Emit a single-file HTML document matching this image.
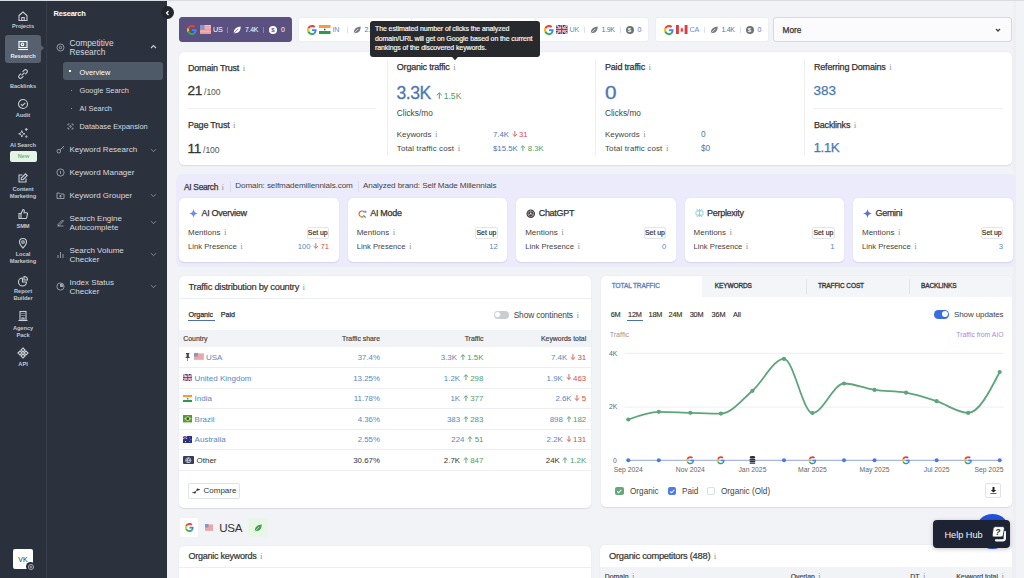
<!DOCTYPE html>
<html><head><meta charset="utf-8">
<style>
*{box-sizing:border-box;margin:0;padding:0}
html,body{width:1024px;height:578px;overflow:hidden;background:#f2f3f7;font-family:"Liberation Sans",sans-serif;color:#333}
.a{position:absolute;white-space:nowrap}
#topline{position:absolute;left:0;top:0;width:1024px;height:1px;background:#d9dce3;z-index:50}
#rail{position:absolute;left:0;top:0;width:47px;height:578px;background:#2b313c;border-right:1px solid #363d48}
#menu{position:absolute;left:47px;top:0;width:120px;height:578px;background:#2c323d}
.ri{position:absolute;left:0;width:46px;text-align:center;color:#c3c8cf;font-size:5.7px;line-height:7px;font-weight:bold;letter-spacing:-.05px}
.ri svg{display:block;margin:0 auto}
.mi{position:absolute;color:#d6dae0;font-size:8px;line-height:9px}
.ms{font-size:7.4px}
.card{position:absolute;background:#fff;border-radius:5px;box-shadow:0 .6px 1.2px rgba(30,40,60,.12)}
.lbl{font-size:8.6px;color:#333}
.inf{color:#9aa0a8;font-size:7px;margin-left:2px}
.blue{color:#4b78b2}
.grn{color:#4f9a6d}
.red{color:#d4504a}
</style>
<style>
.t{position:absolute;white-space:nowrap;line-height:10px;height:10px}
.chip{position:absolute;top:17px;height:24.6px;background:#fff;border-radius:3px;border:1px solid #eceef2}
.chip.act{background:#5a5180;border-color:#5a5180}
.chip > *{position:absolute}
.ccode{top:7px;font-size:7.2px;color:#6a8cc3;line-height:10px;letter-spacing:-.2px}
.cval{top:7px;font-size:7px;color:#4b78b2;line-height:10px;letter-spacing:-.3px}
.act .ccode,.act .cval{color:#fff}
.csep{top:9px;width:1px;height:6px;background:#dde0e6}
.act .csep{background:#8a84a6}
.dol{top:8px;width:8px;height:8px;border-radius:50%;background:#6e7278;color:#fff;font-size:6px;line-height:8px;text-align:center;font-weight:bold}
.act .dol{background:#fff;color:#5a5180}
.flag{top:7.5px;width:11.5px;height:9px;overflow:hidden}
.aicard{position:absolute;top:197.5px;width:159.5px;height:64px;background:#fff;border-radius:5px;box-shadow:0 .6px 1.2px rgba(30,40,60,.12)}
.aicard .t{}
.setup{position:absolute;left:127.5px;top:29.5px;width:22.5px;height:11.5px;border:1px solid #e3e5ea;border-radius:2px;background:#fff;font-size:6.9px;line-height:9.5px;text-align:center;color:#333;font-weight:normal;-webkit-text-stroke:.2px #333}
.th{font-size:6.8px;color:#444;font-weight:bold}
.td{font-size:7.9px}
.inf{font-family:'Liberation Serif',serif;color:#8f959d;font-size:9px;margin-left:3.5px;letter-spacing:0;-webkit-text-stroke:0}
</style>
</head><body>
<div id="topline"></div>
<div id="rail">
  <div class="ri" style="top:10px">
    <svg width="12" height="12" viewBox="0 0 12 12" fill="none" stroke="#c9ced6" stroke-width="1.1"><path d="M2 5.5L6 2l4 3.5V10.5H2z"/><path d="M4.8 10.5V7.5h2.4v3"/></svg>
    <div style="margin-top:1px">Projects</div>
  </div>
  <div style="position:absolute;left:5px;top:35px;width:36px;height:28px;background:#56606e;border-radius:3px"></div>
  <div style="position:absolute;left:41px;top:45px;width:0;height:0;border-top:3.5px solid transparent;border-bottom:3.5px solid transparent;border-left:3.5px solid #56606e"></div>
  <div class="ri" style="top:40px;color:#e8ebef">
    <svg width="12" height="11" viewBox="0 0 12 11" fill="none" stroke="#fff" stroke-width="1.1"><rect x="2" y="1.5" width="8" height="6"/><path d="M1 9.5h10"/><circle cx="5.5" cy="4.3" r="1.3"/></svg>
    <div style="margin-top:2px">Research</div>
  </div>
  <div class="ri" style="top:68px">
    <svg width="12" height="12" viewBox="0 0 12 12" fill="none" stroke="#c9ced6" stroke-width="1.1"><g transform="rotate(-45 6 6)"><path d="M4.8 4.2H2.4a1.8 1.8 0 0 0 0 3.6h2.4M7.2 4.2h2.4a1.8 1.8 0 0 1 0 3.6H7.2M3.9 6h4.2"/></g></svg>
    <div style="margin-top:2.5px">Backlinks</div>
  </div>
  <div class="ri" style="top:98px">
    <svg width="12" height="12" viewBox="0 0 12 12" fill="none" stroke="#c9ced6" stroke-width="1.1"><circle cx="6" cy="6" r="4.5"/><path d="M4 6.2l1.4 1.4L8.2 4.8"/></svg>
    <div style="margin-top:2.2px">Audit</div>
  </div>
  <div class="ri" style="top:127px">
    <svg width="12" height="12" viewBox="0 0 12 12" fill="none" stroke="#c9ced6" stroke-width="1"><path d="M4.8 3.6C5.1 5.6 5.9 6.5 7.9 6.8 5.9 7.1 5.1 8 4.8 10 4.5 8 3.7 7.1 1.7 6.8 3.7 6.5 4.5 5.6 4.8 3.6z"/><path d="M9.3 1C9.4 1.9 9.8 2.3 10.7 2.4 9.8 2.5 9.4 2.9 9.3 3.8 9.2 2.9 8.8 2.5 7.9 2.4 8.8 2.3 9.2 1.9 9.3 1z" fill="#c9ced6" stroke-width=".5"/><path d="M9.3 8.4C9.4 9.2 9.7 9.5 10.5 9.6 9.7 9.7 9.4 10 9.3 10.8 9.2 10 8.9 9.7 8.1 9.6 8.9 9.5 9.2 9.2 9.3 8.4z" fill="#c9ced6" stroke-width=".5"/></svg>
    <div style="margin-top:2.5px">AI Search</div>
  </div>
  <div style="position:absolute;left:10px;top:151px;width:27px;height:11px;background:#e4f5e8;border-radius:2px;color:#6fb98a;font-size:5.6px;line-height:11px;text-align:center;font-weight:bold">New</div>
  <div class="ri" style="top:172px">
    <svg width="12" height="12" viewBox="0 0 12 12" fill="none" stroke="#c9ced6" stroke-width="1.1"><path d="M9 6.5v3.5H2V3h3.5"/><path d="M8.5 1.8l1.7 1.7L6 7.7H4.3V6z"/></svg>
    <div style="margin-top:2px">Content<br>Marketing</div>
  </div>
  <div class="ri" style="top:208px">
    <svg width="12" height="12" viewBox="0 0 12 12" fill="none" stroke="#c9ced6" stroke-width="1.1"><path d="M2 5.5h2v5H2z"/><path d="M4 5.5l2-4c1 0 1.5.7 1.2 2L7 4.8h2.6c.7 0 1 .6.9 1.1l-.8 3.8c-.1.5-.5.8-1 .8H4"/></svg>
    <div style="margin-top:3px">SMM</div>
  </div>
  <div class="ri" style="top:237px">
    <svg width="12" height="12" viewBox="0 0 12 12" fill="none" stroke="#c9ced6" stroke-width="1.1"><path d="M6 11S2.5 7.5 2.5 5a3.5 3.5 0 0 1 7 0C9.5 7.5 6 11 6 11z"/><circle cx="6" cy="5" r="1.3"/></svg>
    <div style="margin-top:2px">Local<br>Marketing</div>
  </div>
  <div class="ri" style="top:275px">
    <svg width="12" height="12" viewBox="0 0 12 12" fill="none" stroke="#c9ced6" stroke-width="1.1"><path d="M5.5 3a4 4 0 1 0 4 4h-4z"/><path d="M7 1.5a3.5 3.5 0 0 1 3.5 3.5H7z"/></svg>
    <div style="margin-top:1px">Report<br>Builder</div>
  </div>
  <div class="ri" style="top:310px">
    <svg width="12" height="12" viewBox="0 0 12 12" fill="none" stroke="#c9ced6" stroke-width="1.1"><rect x="3" y="1.5" width="6" height="9"/><path d="M1.5 10.5h9M4.5 3.5h1M6.5 3.5h1M4.5 5.5h1M6.5 5.5h1M5 10.5V8h2v2.5"/></svg>
    <div style="margin-top:2.7px">Agency<br>Pack</div>
  </div>
  <div class="ri" style="top:347px">
    <svg width="12" height="12" viewBox="0 0 12 12" fill="none" stroke="#c9ced6" stroke-width="1.1"><path d="M6 1l2 2-2 2-2-2zM6 7l2 2-2 2-2-2zM1 6l2-2 2 2-2 2zM7 6l2-2 2 2-2 2z"/></svg>
    <div style="margin-top:2px">API</div>
  </div>
  <div style="position:absolute;left:13px;top:549px;width:20px;height:20px;background:#fff;border-radius:2px;color:#333;font-size:7px;line-height:21px;text-align:center">VK</div>
  <div style="position:absolute;left:26px;top:562px;width:9px;height:9px;background:#2b313c;border-radius:50%;"></div>
  <svg style="position:absolute;left:26.5px;top:562.5px" width="8" height="8" viewBox="0 0 8 8" fill="none" stroke="#aab" stroke-width=".9"><circle cx="4" cy="4" r="2.6"/><circle cx="4" cy="4" r="1"/></svg>
</div>
<div id="menu">
  <div class="a" style="left:6.5px;top:8.5px;color:#fff;font-weight:bold;font-size:7.5px;letter-spacing:-.2px">Research</div>
  <svg class="a" style="left:8.5px;top:43px" width="9" height="9" viewBox="0 0 9 9" fill="none" stroke="#aeb4bd" stroke-width=".8"><circle cx="4.5" cy="4.5" r="3.5"/><circle cx="4.5" cy="4.5" r="1.2"/></svg>
  <div class="mi" style="left:22.5px;top:38.5px;font-size:8.4px">Competitive<br>Research</div>
  <svg class="a" style="left:103px;top:44px" width="7" height="5" viewBox="0 0 7 5" fill="none" stroke="#c9ced6" stroke-width="1.1"><path d="M1 4l2.5-2.5L6 4"/></svg>
  <div style="position:absolute;left:15.5px;top:62px;width:100px;height:18px;background:#4f5a68;border-radius:3px"></div>
  <div style="position:absolute;left:22px;top:70px;width:2px;height:2px;background:#fff"></div>
  <div class="mi ms" style="left:32.5px;top:67.5px;color:#fff">Overview</div>
  <div style="position:absolute;left:24px;top:89.5px;width:1px;height:1px;background:#8a9099"></div>
  <div class="mi ms" style="left:32.5px;top:86px">Google Search</div>
  <div style="position:absolute;left:24px;top:107.5px;width:1px;height:1px;background:#8a9099"></div>
  <div class="mi ms" style="left:32.5px;top:104px">AI Search</div>
  <svg class="a" style="left:20px;top:122.5px" width="7" height="7" viewBox="0 0 7 7" fill="none" stroke="#aeb4bd" stroke-width=".8"><path d="M1 2.5V1h1.5M4.5 1H6v1.5M6 4.5V6H4.5M2.5 6H1V4.5"/><circle cx="3.5" cy="3.5" r=".8"/></svg>
  <div class="mi ms" style="left:32.5px;top:122px">Database Expansion</div>
  <svg class="a" style="left:9px;top:145px" width="9" height="9" viewBox="0 0 9 9" fill="none" stroke="#aeb4bd" stroke-width=".8"><circle cx="2.8" cy="6.2" r="1.8"/><path d="M4.2 4.8L8 1M6.5 2.5l1 1"/></svg>
  <div class="mi" style="left:22.5px;top:145px">Keyword Research</div>
  <svg class="a" style="left:103px;top:148px" width="7" height="5" viewBox="0 0 7 5" fill="none" stroke="#8d949e" stroke-width=".9"><path d="M1 1.2l2.5 2.5L6 1.2"/></svg>
  <svg class="a" style="left:9px;top:168px" width="9" height="9" viewBox="0 0 9 9" fill="none" stroke="#aeb4bd" stroke-width=".8"><circle cx="4.5" cy="4.5" r="3.6"/><path d="M4.5 2.8v3"/></svg>
  <div class="mi" style="left:22.5px;top:167.5px">Keyword Manager</div>
  <svg class="a" style="left:9px;top:190.5px" width="9" height="9" viewBox="0 0 9 9" fill="none" stroke="#aeb4bd" stroke-width=".8"><path d="M1 2h2.5l1 1H8v4.5H1z"/><path d="M4.5 4v2.5M3.2 5.2h2.6"/></svg>
  <div class="mi" style="left:22.5px;top:190.5px">Keyword Grouper</div>
  <svg class="a" style="left:103px;top:193px" width="7" height="5" viewBox="0 0 7 5" fill="none" stroke="#8d949e" stroke-width=".9"><path d="M1 1.2l2.5 2.5L6 1.2"/></svg>
  <svg class="a" style="left:9px;top:218px" width="9" height="9" viewBox="0 0 9 9" fill="none" stroke="#aeb4bd" stroke-width=".8"><path d="M1.5 8h6M2 6.5l4.5-4.5 1 1L3 7.5H2z"/></svg>
  <div class="mi" style="left:22.5px;top:213.5px">Search Engine<br>Autocomplete</div>
  <svg class="a" style="left:103px;top:220px" width="7" height="5" viewBox="0 0 7 5" fill="none" stroke="#8d949e" stroke-width=".9"><path d="M1 1.2l2.5 2.5L6 1.2"/></svg>
  <svg class="a" style="left:9px;top:250px" width="9" height="9" viewBox="0 0 9 9" fill="none" stroke="#aeb4bd" stroke-width=".8"><path d="M2 8V5M4.5 8V2M7 8V4"/></svg>
  <div class="mi" style="left:22.5px;top:245.5px">Search Volume<br>Checker</div>
  <svg class="a" style="left:103px;top:252px" width="7" height="5" viewBox="0 0 7 5" fill="none" stroke="#8d949e" stroke-width=".9"><path d="M1 1.2l2.5 2.5L6 1.2"/></svg>
  <svg class="a" style="left:9px;top:282px" width="9" height="9" viewBox="0 0 9 9" fill="none" stroke="#aeb4bd" stroke-width=".8"><circle cx="4.5" cy="4.5" r="3.6"/><path d="M4.5 4.5V2A2.5 2.5 0 0 1 7 4.5z" fill="#aeb4bd"/></svg>
  <div class="mi" style="left:22.5px;top:277.5px">Index Status<br>Checker</div>
  <svg class="a" style="left:103px;top:284px" width="7" height="5" viewBox="0 0 7 5" fill="none" stroke="#8d949e" stroke-width=".9"><path d="M1 1.2l2.5 2.5L6 1.2"/></svg>
</div>
<div style="position:absolute;left:160.5px;top:6px;width:13.4px;height:13.4px;border-radius:50%;background:#22272e;z-index:5"></div>
<svg style="position:absolute;left:165px;top:10px;z-index:6" width="5" height="6" viewBox="0 0 5 6" fill="none" stroke="#fff" stroke-width="1.2"><path d="M3.5 1L1.5 3l2 2"/></svg>

<div id="main"><div style="position:absolute;left:1012.5px;top:0;width:3.5px;height:578px;background:#eeeff3"></div>
<div class="chip act" style="left:178.5px;width:113.5px">
<span style="left:7.5px;top:7px;line-height:0"><svg width="10" height="10" viewBox="0 0 48 48"><path fill="#EA4335" d="M24 9.5c3.5 0 6.6 1.2 9.1 3.6l6.8-6.8C35.8 2.5 30.3 0 24 0 14.6 0 6.6 5.4 2.6 13.3l7.9 6.1C12.4 13.7 17.7 9.5 24 9.5z"/><path fill="#4285F4" d="M46.1 24.5c0-1.6-.1-3.1-.4-4.5H24v9h12.4c-.5 2.9-2.2 5.3-4.6 7l7.2 5.6c4.2-3.9 7.1-9.7 7.1-17.1z"/><path fill="#FBBC05" d="M10.5 28.6c-.5-1.4-.8-3-.8-4.6s.3-3.2.8-4.6l-7.9-6.1C.9 16.6 0 20.2 0 24s.9 7.4 2.6 10.7l7.9-6.1z"/><path fill="#34A853" d="M24 48c6.5 0 11.9-2.1 15.9-5.8l-7.2-5.6c-2.2 1.5-5 2.4-8.7 2.4-6.3 0-11.6-4.2-13.5-10l-7.9 6.1C6.6 42.6 14.6 48 24 48z"/></svg></span>
<span style="position:absolute;display:block;overflow:hidden;width:11.5px;height:9px;left:20px;top:7px"><svg style="display:block" width="100%" height="100%" viewBox="0 0 19 10" preserveAspectRatio="none"><rect width="19" height="10" fill="#f3c6c6"/><g fill="#e08a8a"><rect y="1.54" width="19" height=".77"/><rect y="3.08" width="19" height=".77"/><rect y="4.62" width="19" height=".77"/><rect y="6.16" width="19" height=".77"/><rect y="7.7" width="19" height=".77"/><rect y="9.23" width="19" height=".77"/></g><rect width="7.6" height="5.4" fill="#8c93c8"/></svg></span>
<span class="ccode" style="left:33.5px">US</span>
<span class="csep" style="left:47.5px"></span>
<span style="left:53.5px;top:8px;line-height:0"><svg style="display:block" width="8" height="8" viewBox="0 0 10 10"><path d="M1 8.6C.8 4.2 3.8 1 9.6.6 9.8 6 6.8 9.2 1.6 9z" fill="#fff"/><path d="M.6 9.6L6.6 3.6" stroke="#5a5180" stroke-width=".9"/></svg></span>
<span class="cval" style="left:65.5px">7.4K</span>
<span class="csep" style="left:83.5px"></span>
<span class="dol" style="left:89.5px">$</span>
<span class="cval" style="left:101.5px">0</span>
</div>
<div class="chip" style="left:298px;width:113.5px">
<span style="left:7.5px;top:7px;line-height:0"><svg width="10" height="10" viewBox="0 0 48 48"><path fill="#EA4335" d="M24 9.5c3.5 0 6.6 1.2 9.1 3.6l6.8-6.8C35.8 2.5 30.3 0 24 0 14.6 0 6.6 5.4 2.6 13.3l7.9 6.1C12.4 13.7 17.7 9.5 24 9.5z"/><path fill="#4285F4" d="M46.1 24.5c0-1.6-.1-3.1-.4-4.5H24v9h12.4c-.5 2.9-2.2 5.3-4.6 7l7.2 5.6c4.2-3.9 7.1-9.7 7.1-17.1z"/><path fill="#FBBC05" d="M10.5 28.6c-.5-1.4-.8-3-.8-4.6s.3-3.2.8-4.6l-7.9-6.1C.9 16.6 0 20.2 0 24s.9 7.4 2.6 10.7l7.9-6.1z"/><path fill="#34A853" d="M24 48c6.5 0 11.9-2.1 15.9-5.8l-7.2-5.6c-2.2 1.5-5 2.4-8.7 2.4-6.3 0-11.6-4.2-13.5-10l-7.9 6.1C6.6 42.6 14.6 48 24 48z"/></svg></span>
<span style="position:absolute;display:block;overflow:hidden;width:11.5px;height:9px;left:20px;top:7px"><svg style="display:block" width="100%" height="100%" viewBox="0 0 9 6" preserveAspectRatio="none"><rect width="9" height="2" fill="#f39c38"/><rect y="2" width="9" height="2" fill="#fff"/><rect y="4" width="9" height="2" fill="#2e9a48"/><circle cx="4.5" cy="3" r=".6" fill="#23408e"/></svg></span>
<span class="ccode" style="left:33.5px">IN</span>
<span class="csep" style="left:47.5px"></span>
<span style="left:53.5px;top:8px;line-height:0"><svg style="display:block" width="8" height="8" viewBox="0 0 10 10"><path d="M1 8.6C.8 4.2 3.8 1 9.6.6 9.8 6 6.8 9.2 1.6 9z" fill="#777b82"/><path d="M.6 9.6L6.6 3.6" stroke="#fff" stroke-width=".9"/></svg></span>
<span class="cval" style="left:65.5px">2.6K</span>
<span class="csep" style="left:83.5px"></span>
<span class="dol" style="left:89.5px">$</span>
<span class="cval" style="left:101.5px">0</span>
</div>
<div class="chip" style="left:411px;width:124.5px">
<span style="left:7.5px;top:7px;line-height:0"><svg width="10" height="10" viewBox="0 0 48 48"><path fill="#EA4335" d="M24 9.5c3.5 0 6.6 1.2 9.1 3.6l6.8-6.8C35.8 2.5 30.3 0 24 0 14.6 0 6.6 5.4 2.6 13.3l7.9 6.1C12.4 13.7 17.7 9.5 24 9.5z"/><path fill="#4285F4" d="M46.1 24.5c0-1.6-.1-3.1-.4-4.5H24v9h12.4c-.5 2.9-2.2 5.3-4.6 7l7.2 5.6c4.2-3.9 7.1-9.7 7.1-17.1z"/><path fill="#FBBC05" d="M10.5 28.6c-.5-1.4-.8-3-.8-4.6s.3-3.2.8-4.6l-7.9-6.1C.9 16.6 0 20.2 0 24s.9 7.4 2.6 10.7l7.9-6.1z"/><path fill="#34A853" d="M24 48c6.5 0 11.9-2.1 15.9-5.8l-7.2-5.6c-2.2 1.5-5 2.4-8.7 2.4-6.3 0-11.6-4.2-13.5-10l-7.9 6.1C6.6 42.6 14.6 48 24 48z"/></svg></span>
<span style="position:absolute;display:block;overflow:hidden;width:11.5px;height:9px;left:20px;top:7px"><svg style="display:block" width="100%" height="100%" viewBox="0 0 19 10" preserveAspectRatio="none"><rect width="19" height="10" fill="#fff"/><g fill="#c8323c"><rect y="1.54" width="19" height=".77"/><rect y="3.08" width="19" height=".77"/><rect y="4.62" width="19" height=".77"/><rect y="6.16" width="19" height=".77"/><rect y="7.7" width="19" height=".77"/><rect y="9.23" width="19" height=".77"/></g><rect width="7.6" height="5.4" fill="#2f3f8a"/></svg></span>
<span class="ccode" style="left:33.5px">US</span>
<span class="csep" style="left:47.5px"></span>
<span style="left:53.5px;top:8px;line-height:0"><svg style="display:block" width="8" height="8" viewBox="0 0 10 10"><path d="M1 8.6C.8 4.2 3.8 1 9.6.6 9.8 6 6.8 9.2 1.6 9z" fill="#777b82"/><path d="M.6 9.6L6.6 3.6" stroke="#fff" stroke-width=".9"/></svg></span>
<span class="cval" style="left:65.5px">2.1K</span>
<span class="csep" style="left:83.5px"></span>
<span class="dol" style="left:89.5px">$</span>
<span class="cval" style="left:101.5px">0</span>
</div>
<div class="chip" style="left:535px;width:113.5px">
<span style="left:7.5px;top:7px;line-height:0"><svg width="10" height="10" viewBox="0 0 48 48"><path fill="#EA4335" d="M24 9.5c3.5 0 6.6 1.2 9.1 3.6l6.8-6.8C35.8 2.5 30.3 0 24 0 14.6 0 6.6 5.4 2.6 13.3l7.9 6.1C12.4 13.7 17.7 9.5 24 9.5z"/><path fill="#4285F4" d="M46.1 24.5c0-1.6-.1-3.1-.4-4.5H24v9h12.4c-.5 2.9-2.2 5.3-4.6 7l7.2 5.6c4.2-3.9 7.1-9.7 7.1-17.1z"/><path fill="#FBBC05" d="M10.5 28.6c-.5-1.4-.8-3-.8-4.6s.3-3.2.8-4.6l-7.9-6.1C.9 16.6 0 20.2 0 24s.9 7.4 2.6 10.7l7.9-6.1z"/><path fill="#34A853" d="M24 48c6.5 0 11.9-2.1 15.9-5.8l-7.2-5.6c-2.2 1.5-5 2.4-8.7 2.4-6.3 0-11.6-4.2-13.5-10l-7.9 6.1C6.6 42.6 14.6 48 24 48z"/></svg></span>
<span style="position:absolute;display:block;overflow:hidden;width:11.5px;height:9px;left:20px;top:7px"><svg style="display:block" width="100%" height="100%" viewBox="0 0 60 40" preserveAspectRatio="none"><rect width="60" height="40" fill="#2a3f8f"/><path d="M0 0L60 40M60 0L0 40" stroke="#fff" stroke-width="8"/><path d="M0 0L60 40M60 0L0 40" stroke="#d0283a" stroke-width="3"/><path d="M30 0v40M0 20h60" stroke="#fff" stroke-width="12"/><path d="M30 0v40M0 20h60" stroke="#d0283a" stroke-width="7"/></svg></span>
<span class="ccode" style="left:33.5px">UK</span>
<span class="csep" style="left:47.5px"></span>
<span style="left:53.5px;top:8px;line-height:0"><svg style="display:block" width="8" height="8" viewBox="0 0 10 10"><path d="M1 8.6C.8 4.2 3.8 1 9.6.6 9.8 6 6.8 9.2 1.6 9z" fill="#777b82"/><path d="M.6 9.6L6.6 3.6" stroke="#fff" stroke-width=".9"/></svg></span>
<span class="cval" style="left:65.5px">1.9K</span>
<span class="csep" style="left:83.5px"></span>
<span class="dol" style="left:89.5px">$</span>
<span class="cval" style="left:101.5px">0</span>
</div>
<div class="chip" style="left:655px;width:113.5px">
<span style="left:7.5px;top:7px;line-height:0"><svg width="10" height="10" viewBox="0 0 48 48"><path fill="#EA4335" d="M24 9.5c3.5 0 6.6 1.2 9.1 3.6l6.8-6.8C35.8 2.5 30.3 0 24 0 14.6 0 6.6 5.4 2.6 13.3l7.9 6.1C12.4 13.7 17.7 9.5 24 9.5z"/><path fill="#4285F4" d="M46.1 24.5c0-1.6-.1-3.1-.4-4.5H24v9h12.4c-.5 2.9-2.2 5.3-4.6 7l7.2 5.6c4.2-3.9 7.1-9.7 7.1-17.1z"/><path fill="#FBBC05" d="M10.5 28.6c-.5-1.4-.8-3-.8-4.6s.3-3.2.8-4.6l-7.9-6.1C.9 16.6 0 20.2 0 24s.9 7.4 2.6 10.7l7.9-6.1z"/><path fill="#34A853" d="M24 48c6.5 0 11.9-2.1 15.9-5.8l-7.2-5.6c-2.2 1.5-5 2.4-8.7 2.4-6.3 0-11.6-4.2-13.5-10l-7.9 6.1C6.6 42.6 14.6 48 24 48z"/></svg></span>
<span style="position:absolute;display:block;overflow:hidden;width:11.5px;height:9px;left:20px;top:7px"><svg style="display:block" width="100%" height="100%" viewBox="0 0 24 12" preserveAspectRatio="none"><rect width="24" height="12" fill="#fff"/><rect width="6" height="12" fill="#e03a3e"/><rect x="18" width="6" height="12" fill="#e03a3e"/><path d="M12 2.5l1 2 1.5-.5-.5 2.5 1.5-.5-1 1.5.5 1H12.3v1.5h-.6V8.5H9.5l.5-1-1-1.5 1.5.5-.5-2.5 1.5.5z" fill="#e03a3e"/></svg></span>
<span class="ccode" style="left:33.5px">CA</span>
<span class="csep" style="left:47.5px"></span>
<span style="left:53.5px;top:8px;line-height:0"><svg style="display:block" width="8" height="8" viewBox="0 0 10 10"><path d="M1 8.6C.8 4.2 3.8 1 9.6.6 9.8 6 6.8 9.2 1.6 9z" fill="#777b82"/><path d="M.6 9.6L6.6 3.6" stroke="#fff" stroke-width=".9"/></svg></span>
<span class="cval" style="left:65.5px">1.4K</span>
<span class="csep" style="left:83.5px"></span>
<span class="dol" style="left:89.5px">$</span>
<span class="cval" style="left:101.5px">0</span>
</div>
<div style="position:absolute;left:773px;top:17px;width:239.2px;height:24.6px;background:#fbfbfd;border:1px solid #d5d8de;border-radius:3px"></div>
<div class="t" style="left:782.5px;top:24.6px;font-size:8.3px;color:#333;-webkit-text-stroke:.25px #333">More</div>
<svg style="position:absolute;left:995px;top:27.5px" width="6" height="4" viewBox="0 0 6 4" fill="none" stroke="#444" stroke-width="1.3"><path d="M1 1l2 2 2-2"/></svg>
<div class="card" style="left:178.5px;top:51.7px;width:833.5px;height:113.5px"></div>
<div class="t" style="left:188px;top:62.5px;font-size:9px;color:#333;letter-spacing:-.2px;-webkit-text-stroke:.25px #333">Domain Trust<span class="inf">i</span></div>
<div class="t" style="left:187.5px;top:86px;font-size:13.6px;color:#333;letter-spacing:-.4px;-webkit-text-stroke:.3px #333">21<span style="font-size:8.6px;color:#555;letter-spacing:-.1px;-webkit-text-stroke:0"> /100</span></div>
<div style="position:absolute;left:188px;top:108px;width:188px;height:1px;background:#eceef2"></div>
<div class="t" style="left:188px;top:119.8px;font-size:9px;color:#333;letter-spacing:-.2px;-webkit-text-stroke:.25px #333">Page Trust<span class="inf">i</span></div>
<div class="t" style="left:187.5px;top:144.3px;font-size:13.6px;color:#333;letter-spacing:-.4px;-webkit-text-stroke:.3px #333">11<span style="font-size:8.6px;color:#555;letter-spacing:-.1px;-webkit-text-stroke:0"> /100</span></div>
<div style="position:absolute;left:387px;top:60px;width:1px;height:95px;background:#eceef2"></div>
<div class="t" style="left:396.8px;top:62.3px;font-size:9px;color:#333;letter-spacing:-.2px;-webkit-text-stroke:.25px #333">Organic traffic<span class="inf">i</span></div>
<div class="t" style="left:396.5px;top:87.6px;font-size:17.6px;color:#4b78b2;letter-spacing:-.5px;-webkit-text-stroke:.3px #4b78b2">3.3K</div>
<div class="t" style="left:435px;top:90.7px;font-size:8.6px;color:#4f9a6d;"><svg style="display:inline-block;vertical-align:0;margin:0 1.6px 0 .5px" width="6.6" height="7.0" viewBox="0 0 7 7.2" fill="none" stroke="#4f9a6d" stroke-width="1.05"><path d="M3.5 7.2V.9M.8 3.4L3.5.8l2.7 2.6"/></svg>1.5K</div>
<div class="t" style="left:396.8px;top:108px;font-size:8.3px;color:#444;">Clicks/mo</div>
<div class="t" style="left:396.8px;top:129px;font-size:7.9px;color:#444;">Keywords<span class="inf">i</span></div>
<div class="t" style="left:396.8px;top:143.3px;font-size:7.9px;color:#444;letter-spacing:.15px">Total traffic cost<span class="inf">i</span></div>
<div class="t" style="left:493px;top:130px;font-size:7.8px;color:#4b78b2;">7.4K <svg style="display:inline-block;vertical-align:0;margin:0 1.6px 0 .5px" width="5.7" height="6.0" viewBox="0 0 7 7.2" fill="none" stroke="#d4504a" stroke-width="1.05"><path d="M3.5 0V6.3M.8 3.8L3.5 6.4l2.7-2.6"/></svg><span style="color:#d4504a">31</span></div>
<div class="t" style="left:493px;top:144.3px;font-size:7.8px;color:#4b78b2;">$15.5K <svg style="display:inline-block;vertical-align:0;margin:0 1.6px 0 .5px" width="5.7" height="6.0" viewBox="0 0 7 7.2" fill="none" stroke="#4f9a6d" stroke-width="1.05"><path d="M3.5 7.2V.9M.8 3.4L3.5.8l2.7 2.6"/></svg><span style="color:#4f9a6d">8.3K</span></div>
<div style="position:absolute;left:595px;top:60px;width:1px;height:95px;background:#eceef2"></div>
<div class="t" style="left:605px;top:62.3px;font-size:9px;color:#333;letter-spacing:-.2px;-webkit-text-stroke:.25px #333">Paid traffic<span class="inf">i</span></div>
<div class="t" style="left:604.5px;top:87.6px;font-size:18.5px;color:#4b78b2;letter-spacing:0;-webkit-text-stroke:.3px #4b78b2;transform:scaleX(1.12);transform-origin:0 0">0</div>
<div class="t" style="left:605px;top:108px;font-size:8.3px;color:#444;">Clicks/mo</div>
<div class="t" style="left:605px;top:129px;font-size:7.9px;color:#444;">Keywords<span class="inf">i</span></div>
<div class="t" style="left:605px;top:143.3px;font-size:7.9px;color:#444;letter-spacing:.15px">Total traffic cost<span class="inf">i</span></div>
<div class="t" style="left:701px;top:129px;font-size:8.3px;color:#4b78b2;">0</div>
<div class="t" style="left:701px;top:143.3px;font-size:8.3px;color:#4b78b2;">$0</div>
<div style="position:absolute;left:804px;top:60px;width:1px;height:95px;background:#eceef2"></div>
<div class="t" style="left:814px;top:62.3px;font-size:9px;color:#333;letter-spacing:-.2px;-webkit-text-stroke:.25px #333">Referring Domains<span class="inf">i</span></div>
<div class="t" style="left:813.5px;top:85.5px;font-size:13.5px;color:#4b78b2;-webkit-text-stroke:.25px #4b78b2">383</div>
<div style="position:absolute;left:814px;top:108px;width:189px;height:1px;background:#eceef2"></div>
<div class="t" style="left:814px;top:119.5px;font-size:9px;color:#333;letter-spacing:-.2px;-webkit-text-stroke:.25px #333">Backlinks<span class="inf">i</span></div>
<div class="t" style="left:813.5px;top:142.5px;font-size:13.5px;color:#4b78b2;letter-spacing:-.5px;-webkit-text-stroke:.25px #4b78b2">1.1K</div>
<div style="position:absolute;left:370px;top:21px;width:170px;height:35.5px;background:#27292d;border-radius:3px;z-index:20"></div>
<svg style="position:absolute;left:450px;top:56px;z-index:20" width="10" height="5" viewBox="0 0 10 5"><path d="M1.2 0H8.8L5 4.2z" fill="#27292d"/></svg>
<div style="position:absolute;left:375px;top:24.3px;font-size:7px;line-height:9.4px;color:#f4f4f4;z-index:21;white-space:nowrap;letter-spacing:-.1px;-webkit-text-stroke:.2px #f4f4f4">The estimated number of clicks the analyzed<br>domain/URL will get on Google based on the current<br>rankings of the discovered keywords.</div>
<div style="position:absolute;left:175.5px;top:174px;width:840px;height:93px;background:#ecebfb;border-radius:6px"></div>
<div class="t" style="left:184px;top:181.8px;font-size:8.4px;color:#333;letter-spacing:-.3px;-webkit-text-stroke:.25px #333">AI Search<span class="inf">i</span></div>
<div style="position:absolute;left:229.5px;top:181px;width:1px;height:11px;background:#dddbf0"></div>
<div class="t" style="left:235.3px;top:181.3px;font-size:8.1px;color:#444;letter-spacing:-.1px">Domain: selfmademillennials.com</div>
<div style="position:absolute;left:357.8px;top:181px;width:1px;height:11px;background:#dddbf0"></div>
<div class="t" style="left:363px;top:181.3px;font-size:8.1px;color:#444;letter-spacing:-.1px">Analyzed brand: Self Made Millennials</div>
<div class="aicard" style="left:179px">
<span style="position:absolute;left:10px;top:11.3px;line-height:0"><svg width="9" height="9" viewBox="0 0 10 10"><path d="M5 0C5.4 3 7 4.6 10 5 7 5.4 5.4 7 5 10 4.6 7 3 5.4 0 5 3 4.6 4.6 3 5 0z" fill="#6f8ce6"/></svg></span>
<div class="t" style="left:22.5px;top:10.6px;font-size:9px;color:#333;letter-spacing:-.3px;-webkit-text-stroke:.25px #333">AI Overview</div>
<div class="t" style="left:9px;top:29.7px;font-size:8px;color:#444">Mentions<span class="inf">i</span></div>
<div class="setup">Set up</div>
<div class="t" style="left:9px;top:43.6px;font-size:7.7px;color:#444">Link Presence<span class="inf">i</span></div>
<div class="t" style="right:9.5px;top:44.4px;font-size:7.7px"><span style="color:#5a87c0">100</span> <svg style="display:inline-block;vertical-align:0;margin:0 1.6px 0 .5px" width="5.7" height="6.0" viewBox="0 0 7 7.2" fill="none" stroke="#d4504a" stroke-width="1.05"><path d="M3.5 0V6.3M.8 3.8L3.5 6.4l2.7-2.6"/></svg><span style="color:#d4504a">71</span></div>
</div>
<div class="aicard" style="left:347.7px">
<span style="position:absolute;left:10px;top:11.3px;line-height:0"><svg width="10" height="10" viewBox="0 0 10 10" fill="none"><path d="M6.2 3.1A2.9 2.9 0 1 0 6 7" stroke="#d9534f" stroke-width="1.1"/><path d="M2.2 7.4A2.9 2.9 0 0 0 5.8 7.4" stroke="#f2b33d" stroke-width="1.1"/><path d="M5.6 6.4L7.6 8.6" stroke="#3aa757" stroke-width="1.1"/><circle cx="7.3" cy="2.8" r="1.3" fill="#7b9be0"/></svg></span>
<div class="t" style="left:22.5px;top:10.6px;font-size:9px;color:#333;letter-spacing:-.3px;-webkit-text-stroke:.25px #333">AI Mode</div>
<div class="t" style="left:9px;top:29.7px;font-size:8px;color:#444">Mentions<span class="inf">i</span></div>
<div class="setup">Set up</div>
<div class="t" style="left:9px;top:43.6px;font-size:7.7px;color:#444">Link Presence<span class="inf">i</span></div>
<div class="t" style="right:9.5px;top:44.4px;font-size:7.7px"><span style="color:#5a87c0">12</span></div>
</div>
<div class="aicard" style="left:516.2px">
<span style="position:absolute;left:10px;top:11.3px;line-height:0"><svg width="9.5" height="9.5" viewBox="0 0 10 10"><circle cx="5" cy="5" r="4.5" fill="#3d3d40"/><g fill="none" stroke="#fff" stroke-width=".55" opacity=".85"><path d="M5 1.8L7.8 3.4V6.6L5 8.2 2.2 6.6V3.4z"/><path d="M5 1.8V5M7.8 6.6L5 5M2.2 6.6L5 5"/></g><circle cx="5" cy="5" r=".7" fill="#fff"/></svg></span>
<div class="t" style="left:22.5px;top:10.6px;font-size:9px;color:#333;letter-spacing:-.3px;-webkit-text-stroke:.25px #333">ChatGPT</div>
<div class="t" style="left:9px;top:29.7px;font-size:8px;color:#444">Mentions<span class="inf">i</span></div>
<div class="setup">Set up</div>
<div class="t" style="left:9px;top:43.6px;font-size:7.7px;color:#444">Link Presence<span class="inf">i</span></div>
<div class="t" style="right:9.5px;top:44.4px;font-size:7.7px"><span style="color:#5a87c0">0</span></div>
</div>
<div class="aicard" style="left:684.6px">
<span style="position:absolute;left:10px;top:10.7px;line-height:0"><svg width="9" height="10" viewBox="0 0 9 10" fill="none" stroke="#8fcfd8" stroke-width=".9"><path d="M1 3h7v4H1zM4.5 1v8M1.5 1l3 2 3-2M1.5 9l3-2 3 2"/></svg></span>
<div class="t" style="left:22.5px;top:10.6px;font-size:9px;color:#333;letter-spacing:-.3px;-webkit-text-stroke:.25px #333">Perplexity</div>
<div class="t" style="left:9px;top:29.7px;font-size:8px;color:#444">Mentions<span class="inf">i</span></div>
<div class="setup">Set up</div>
<div class="t" style="left:9px;top:43.6px;font-size:7.7px;color:#444">Link Presence<span class="inf">i</span></div>
<div class="t" style="right:9.5px;top:44.4px;font-size:7.7px"><span style="color:#5a87c0">1</span></div>
</div>
<div class="aicard" style="left:853px">
<span style="position:absolute;left:10px;top:11.3px;line-height:0"><svg width="9" height="9" viewBox="0 0 10 10"><defs><linearGradient id="gg" x1="0" y1="0" x2="1" y2="1"><stop offset="0" stop-color="#4a7be8"/><stop offset=".6" stop-color="#5b6fd8"/><stop offset="1" stop-color="#e0524a"/></linearGradient></defs><path d="M5 0C5.4 3 7 4.6 10 5 7 5.4 5.4 7 5 10 4.6 7 3 5.4 0 5 3 4.6 4.6 3 5 0z" fill="url(#gg)"/></svg></span>
<div class="t" style="left:22.5px;top:10.6px;font-size:9px;color:#333;letter-spacing:-.3px;-webkit-text-stroke:.25px #333">Gemini</div>
<div class="t" style="left:9px;top:29.7px;font-size:8px;color:#444">Mentions<span class="inf">i</span></div>
<div class="setup">Set up</div>
<div class="t" style="left:9px;top:43.6px;font-size:7.7px;color:#444">Link Presence<span class="inf">i</span></div>
<div class="t" style="right:9.5px;top:44.4px;font-size:7.7px"><span style="color:#5a87c0">3</span></div>
</div>
<div class="card" style="left:178.6px;top:276.2px;width:412.4px;height:231.8px"></div>
<div class="t" style="left:188.5px;top:281.8px;font-size:9.3px;color:#333;letter-spacing:-.25px;-webkit-text-stroke:.2px #333">Traffic distribution by country<span class="inf">i</span></div>
<div style="position:absolute;left:178.6px;top:298px;width:412.4px;height:1px;background:#eceef2"></div>
<div class="t" style="left:188.5px;top:309.5px;font-size:7.2px;color:#333;letter-spacing:-.1px;-webkit-text-stroke:.25px #333">Organic</div>
<div style="position:absolute;left:188px;top:319.6px;width:26.6px;height:1.2px;background:#4b6fb5"></div>
<div class="t" style="left:220.7px;top:309.5px;font-size:7.2px;color:#333;-webkit-text-stroke:.25px #333">Paid</div>
<div style="position:absolute;left:493.5px;top:310.5px;width:15.2px;height:8px;border-radius:4px;background:#c9ccd2"></div>
<div style="position:absolute;left:493.6px;top:310.6px;width:7.8px;height:7.8px;border-radius:50%;background:#fff;border:1px solid #d0d3d8"></div>
<div class="t" style="left:513.7px;top:309.5px;font-size:8.4px;color:#444;letter-spacing:-.15px">Show continents<span class="inf">i</span></div>
<div style="position:absolute;left:178.6px;top:330.2px;width:412.4px;height:16.8px;background:#f2f3f7"></div>
<div class="t" style="left:183.3px;top:333.6px;font-size:6.9px;color:#444;-webkit-text-stroke:.18px #444">Country</div>
<div class="t" style="right:644px;top:333.6px;font-size:6.9px;color:#444;-webkit-text-stroke:.18px #444">Traffic share</div>
<div class="t" style="right:540.6px;top:333.6px;font-size:6.9px;color:#444;-webkit-text-stroke:.18px #444">Traffic</div>
<div class="t" style="right:437.79999999999995px;top:333.6px;font-size:6.9px;color:#444;-webkit-text-stroke:.18px #444">Keywords total</div>
<svg style="position:absolute;left:185.2px;top:352.79999999999995px" width="5.4" height="8" viewBox="0 0 5.4 8"><path d="M1 0h3.4v1l-.6.3V3.6L5.2 5H.2L1.6 3.6V1.3L1 1z M2.4 5h.6V8h-.6z" fill="#444"/></svg>
<span style="position:absolute;display:block;overflow:hidden;width:9.8px;height:6.5px;left:194px;top:353.09999999999997px"><svg style="display:block" width="100%" height="100%" viewBox="0 0 19 10" preserveAspectRatio="none"><rect width="19" height="10" fill="#f3c6c6"/><g fill="#e08a8a"><rect y="1.54" width="19" height=".77"/><rect y="3.08" width="19" height=".77"/><rect y="4.62" width="19" height=".77"/><rect y="6.16" width="19" height=".77"/><rect y="7.7" width="19" height=".77"/><rect y="9.23" width="19" height=".77"/></g><rect width="7.6" height="5.4" fill="#8c93c8"/></svg></span>
<div class="t" style="left:206px;top:353.2px;font-size:8px;color:#5a87c0;">USA</div>
<div class="t" style="right:644px;top:353.2px;font-size:7.9px;color:#5a87c0;">37.4%</div>
<div class="t" style="right:540.6px;top:353.2px;font-size:7.9px;color:#5a87c0;">3.3K <svg style="display:inline-block;vertical-align:0;margin:0 1.6px 0 .5px" width="5.9" height="6.2" viewBox="0 0 7 7.2" fill="none" stroke="#4f9a6d" stroke-width="1.05"><path d="M3.5 7.2V.9M.8 3.4L3.5.8l2.7 2.6"/></svg><span style="color:#4f9a6d">1.5K</span></div>
<div class="t" style="right:437.79999999999995px;top:353.2px;font-size:7.9px;color:#5a87c0;">7.4K <svg style="display:inline-block;vertical-align:0;margin:0 1.6px 0 .5px" width="5.9" height="6.2" viewBox="0 0 7 7.2" fill="none" stroke="#d4504a" stroke-width="1.05"><path d="M3.5 0V6.3M.8 3.8L3.5 6.4l2.7-2.6"/></svg><span style="color:#d4504a">31</span></div>
<div style="position:absolute;left:178.6px;top:367.2px;width:412.4px;height:1px;background:#eceef2"></div>
<span style="position:absolute;display:block;overflow:hidden;width:9.6px;height:7.4px;left:182.6px;top:373.9px"><svg style="display:block" width="100%" height="100%" viewBox="0 0 60 40" preserveAspectRatio="none"><rect width="60" height="40" fill="#2a3f8f"/><path d="M0 0L60 40M60 0L0 40" stroke="#fff" stroke-width="8"/><path d="M0 0L60 40M60 0L0 40" stroke="#d0283a" stroke-width="3"/><path d="M30 0v40M0 20h60" stroke="#fff" stroke-width="12"/><path d="M30 0v40M0 20h60" stroke="#d0283a" stroke-width="7"/></svg></span>
<div class="t" style="left:194.6px;top:373.5px;font-size:8px;color:#5a87c0;">United Kingdom</div>
<div class="t" style="right:644px;top:373.5px;font-size:7.9px;color:#5a87c0;">13.25%</div>
<div class="t" style="right:540.6px;top:373.5px;font-size:7.9px;color:#5a87c0;">1.2K <svg style="display:inline-block;vertical-align:0;margin:0 1.6px 0 .5px" width="5.9" height="6.2" viewBox="0 0 7 7.2" fill="none" stroke="#4f9a6d" stroke-width="1.05"><path d="M3.5 7.2V.9M.8 3.4L3.5.8l2.7 2.6"/></svg><span style="color:#4f9a6d">298</span></div>
<div class="t" style="right:437.79999999999995px;top:373.5px;font-size:7.9px;color:#5a87c0;">1.9K <svg style="display:inline-block;vertical-align:0;margin:0 1.6px 0 .5px" width="5.9" height="6.2" viewBox="0 0 7 7.2" fill="none" stroke="#d4504a" stroke-width="1.05"><path d="M3.5 0V6.3M.8 3.8L3.5 6.4l2.7-2.6"/></svg><span style="color:#d4504a">463</span></div>
<div style="position:absolute;left:178.6px;top:387.6px;width:412.4px;height:1px;background:#eceef2"></div>
<span style="position:absolute;display:block;overflow:hidden;width:9.6px;height:7.4px;left:182.6px;top:394.5px"><svg style="display:block" width="100%" height="100%" viewBox="0 0 9 6" preserveAspectRatio="none"><rect width="9" height="2" fill="#f39c38"/><rect y="2" width="9" height="2" fill="#fff"/><rect y="4" width="9" height="2" fill="#2e9a48"/><circle cx="4.5" cy="3" r=".6" fill="#23408e"/></svg></span>
<div class="t" style="left:194.6px;top:394.1px;font-size:8px;color:#5a87c0;">India</div>
<div class="t" style="right:644px;top:394.1px;font-size:7.9px;color:#5a87c0;">11.78%</div>
<div class="t" style="right:540.6px;top:394.1px;font-size:7.9px;color:#5a87c0;">1K <svg style="display:inline-block;vertical-align:0;margin:0 1.6px 0 .5px" width="5.9" height="6.2" viewBox="0 0 7 7.2" fill="none" stroke="#4f9a6d" stroke-width="1.05"><path d="M3.5 7.2V.9M.8 3.4L3.5.8l2.7 2.6"/></svg><span style="color:#4f9a6d">377</span></div>
<div class="t" style="right:437.79999999999995px;top:394.1px;font-size:7.9px;color:#5a87c0;">2.6K <svg style="display:inline-block;vertical-align:0;margin:0 1.6px 0 .5px" width="5.9" height="6.2" viewBox="0 0 7 7.2" fill="none" stroke="#d4504a" stroke-width="1.05"><path d="M3.5 0V6.3M.8 3.8L3.5 6.4l2.7-2.6"/></svg><span style="color:#d4504a">5</span></div>
<div style="position:absolute;left:178.6px;top:408.2px;width:412.4px;height:1px;background:#eceef2"></div>
<span style="position:absolute;display:block;overflow:hidden;width:9.6px;height:7.4px;left:182.6px;top:415.2px"><svg style="display:block" width="100%" height="100%" viewBox="0 0 14 10" preserveAspectRatio="none"><rect width="14" height="10" fill="#3aa34a"/><path d="M7 1.2L12.5 5 7 8.8 1.5 5z" fill="#f5d03a"/><circle cx="7" cy="5" r="2" fill="#2c4d9a"/></svg></span>
<div class="t" style="left:194.6px;top:414.8px;font-size:8px;color:#5a87c0;">Brazil</div>
<div class="t" style="right:644px;top:414.8px;font-size:7.9px;color:#5a87c0;">4.36%</div>
<div class="t" style="right:540.6px;top:414.8px;font-size:7.9px;color:#5a87c0;">383 <svg style="display:inline-block;vertical-align:0;margin:0 1.6px 0 .5px" width="5.9" height="6.2" viewBox="0 0 7 7.2" fill="none" stroke="#4f9a6d" stroke-width="1.05"><path d="M3.5 7.2V.9M.8 3.4L3.5.8l2.7 2.6"/></svg><span style="color:#4f9a6d">283</span></div>
<div class="t" style="right:437.79999999999995px;top:414.8px;font-size:7.9px;color:#5a87c0;">898 <svg style="display:inline-block;vertical-align:0;margin:0 1.6px 0 .5px" width="5.9" height="6.2" viewBox="0 0 7 7.2" fill="none" stroke="#4f9a6d" stroke-width="1.05"><path d="M3.5 7.2V.9M.8 3.4L3.5.8l2.7 2.6"/></svg><span style="color:#4f9a6d">182</span></div>
<div style="position:absolute;left:178.6px;top:428.8px;width:412.4px;height:1px;background:#eceef2"></div>
<span style="position:absolute;display:block;overflow:hidden;width:9.6px;height:7.4px;left:182.6px;top:435.8px"><svg style="display:block" width="100%" height="100%" viewBox="0 0 14 10" preserveAspectRatio="none"><rect width="14" height="10" fill="#24308a"/><path d="M0 0L6 4M6 0L0 4" stroke="#fff" stroke-width="1"/><path d="M3 0v4.5M0 2.2h6.5" stroke="#d33" stroke-width="1"/><g fill="#fff"><circle cx="10" cy="2.5" r=".6"/><circle cx="11.5" cy="5" r=".6"/><circle cx="10" cy="7.5" r=".6"/><circle cx="3.5" cy="7.5" r=".8"/></g></svg></span>
<div class="t" style="left:194.6px;top:435.40000000000003px;font-size:8px;color:#5a87c0;">Australia</div>
<div class="t" style="right:644px;top:435.40000000000003px;font-size:7.9px;color:#5a87c0;">2.55%</div>
<div class="t" style="right:540.6px;top:435.40000000000003px;font-size:7.9px;color:#5a87c0;">224 <svg style="display:inline-block;vertical-align:0;margin:0 1.6px 0 .5px" width="5.9" height="6.2" viewBox="0 0 7 7.2" fill="none" stroke="#4f9a6d" stroke-width="1.05"><path d="M3.5 7.2V.9M.8 3.4L3.5.8l2.7 2.6"/></svg><span style="color:#4f9a6d">51</span></div>
<div class="t" style="right:437.79999999999995px;top:435.40000000000003px;font-size:7.9px;color:#5a87c0;">2.2K <svg style="display:inline-block;vertical-align:0;margin:0 1.6px 0 .5px" width="5.9" height="6.2" viewBox="0 0 7 7.2" fill="none" stroke="#d4504a" stroke-width="1.05"><path d="M3.5 0V6.3M.8 3.8L3.5 6.4l2.7-2.6"/></svg><span style="color:#d4504a">131</span></div>
<div style="position:absolute;left:178.6px;top:449.4px;width:412.4px;height:1px;background:#eceef2"></div>
<span style="position:absolute;left:182.9px;top:455.8px;width:11.2px;height:8px;background:#363b5a;border-radius:1px"></span>
<svg style="position:absolute;left:185.2px;top:456.5px" width="6.6" height="6.6" viewBox="0 0 10 10" fill="none" stroke="#e8e9f0" stroke-width="1"><circle cx="5" cy="5" r="4"/><path d="M1 5h8M5 1c-2 2.5-2 5.5 0 8M5 1c2 2.5 2 5.5 0 8"/></svg>
<div class="t" style="left:196.5px;top:455.8px;font-size:8px;color:#333;">Other</div>
<div class="t" style="right:644px;top:455.8px;font-size:7.9px;color:#333;">30.67%</div>
<div class="t" style="right:540.6px;top:455.8px;font-size:7.9px;color:#333;">2.7K <svg style="display:inline-block;vertical-align:0;margin:0 1.6px 0 .5px" width="5.9" height="6.2" viewBox="0 0 7 7.2" fill="none" stroke="#4f9a6d" stroke-width="1.05"><path d="M3.5 7.2V.9M.8 3.4L3.5.8l2.7 2.6"/></svg><span style="color:#4f9a6d">847</span></div>
<div class="t" style="right:437.79999999999995px;top:455.8px;font-size:7.9px;color:#333;">24K <svg style="display:inline-block;vertical-align:0;margin:0 1.6px 0 .5px" width="5.9" height="6.2" viewBox="0 0 7 7.2" fill="none" stroke="#4f9a6d" stroke-width="1.05"><path d="M3.5 7.2V.9M.8 3.4L3.5.8l2.7 2.6"/></svg><span style="color:#4f9a6d">1.2K</span></div>
<div style="position:absolute;left:178.6px;top:469.8px;width:412.4px;height:1px;background:#eceef2"></div>
<div style="position:absolute;left:187.9px;top:483.4px;width:51.8px;height:15.2px;border:1px solid #dfe2e7;border-radius:2px;background:#fff"></div>
<svg style="position:absolute;left:191.6px;top:488px" width="8.5" height="6" viewBox="0 0 8.5 6"><path d="M.3 4.6H2.6L5.6 1.6H8.2" fill="none" stroke="#444" stroke-width=".9"/><circle cx="2.8" cy="4.5" r="1.1" fill="#333"/><circle cx="5.6" cy="1.7" r="1.1" fill="#333"/></svg>
<div class="t" style="left:203.5px;top:486px;font-size:8px;color:#333;">Compare</div>
<div style="position:absolute;left:179.5px;top:517.6px;width:18.7px;height:19.1px;background:#fff;border-radius:2px"></div>
<span style="position:absolute;left:184.5px;top:522.7px;line-height:0"><svg width="9" height="9" viewBox="0 0 48 48"><path fill="#EA4335" d="M24 9.5c3.5 0 6.6 1.2 9.1 3.6l6.8-6.8C35.8 2.5 30.3 0 24 0 14.6 0 6.6 5.4 2.6 13.3l7.9 6.1C12.4 13.7 17.7 9.5 24 9.5z"/><path fill="#4285F4" d="M46.1 24.5c0-1.6-.1-3.1-.4-4.5H24v9h12.4c-.5 2.9-2.2 5.3-4.6 7l7.2 5.6c4.2-3.9 7.1-9.7 7.1-17.1z"/><path fill="#FBBC05" d="M10.5 28.6c-.5-1.4-.8-3-.8-4.6s.3-3.2.8-4.6l-7.9-6.1C.9 16.6 0 20.2 0 24s.9 7.4 2.6 10.7l7.9-6.1z"/><path fill="#34A853" d="M24 48c6.5 0 11.9-2.1 15.9-5.8l-7.2-5.6c-2.2 1.5-5 2.4-8.7 2.4-6.3 0-11.6-4.2-13.5-10l-7.9 6.1C6.6 42.6 14.6 48 24 48z"/></svg></span>
<span style="position:absolute;display:block;overflow:hidden;width:8.8px;height:6.6px;left:204.6px;top:524.3px"><svg style="display:block" width="100%" height="100%" viewBox="0 0 19 10" preserveAspectRatio="none"><rect width="19" height="10" fill="#f3c6c6"/><g fill="#e08a8a"><rect y="1.54" width="19" height=".77"/><rect y="3.08" width="19" height=".77"/><rect y="4.62" width="19" height=".77"/><rect y="6.16" width="19" height=".77"/><rect y="7.7" width="19" height=".77"/><rect y="9.23" width="19" height=".77"/></g><rect width="7.6" height="5.4" fill="#8c93c8"/></svg></span>
<div class="t" style="left:219.3px;top:522.8px;font-size:11.6px;color:#333;letter-spacing:-.3px">USA</div>
<div style="position:absolute;left:248.3px;top:517.6px;width:19.6px;height:19.1px;background:#e8f6e5;border-radius:2px"></div>
<span style="position:absolute;left:254px;top:523.5px;line-height:0"><svg style="display:block" width="8" height="8" viewBox="0 0 10 10"><path d="M1 8.6C.8 4.2 3.8 1 9.6.6 9.8 6 6.8 9.2 1.6 9z" fill="#449c58"/><path d="M.6 9.6L6.6 3.6" stroke="#e8f6e5" stroke-width=".9"/></svg></span>
<div class="card" style="left:178.6px;top:545.8px;width:412.4px;height:40px"></div>
<div class="t" style="left:188.5px;top:551.2px;font-size:9px;color:#333;letter-spacing:-.25px;-webkit-text-stroke:.2px #333">Organic keywords<span class="inf">i</span></div>
<div style="position:absolute;left:178.6px;top:567px;width:412.4px;height:1px;background:#eceef2"></div>
<div class="card" style="left:600px;top:544.7px;width:412px;height:40px"></div>
<div class="t" style="left:609px;top:550.7px;font-size:9.3px;color:#333;letter-spacing:-.25px;-webkit-text-stroke:.2px #333">Organic competitors (488)<span class="inf">i</span></div>
<div style="position:absolute;left:600px;top:567px;width:412px;height:11px;background:#f2f3f7"></div>
<div class="t" style="left:604.8px;top:570.5px;font-size:6.9px;color:#444;-webkit-text-stroke:.18px #444">Domain<span class="inf">i</span></div>
<div class="t" style="left:790.7px;top:570.5px;font-size:6.9px;color:#444;-webkit-text-stroke:.18px #444">Overlap<span class="inf">i</span></div>
<div class="t" style="left:910.3px;top:570.5px;font-size:6.9px;color:#444;-webkit-text-stroke:.18px #444">DT<span class="inf">i</span></div>
<div class="t" style="right:20px;top:570.5px;font-size:6.9px;color:#444;-webkit-text-stroke:.18px #444">Keyword total<span class="inf">i</span></div>
<div class="card" style="left:601.3px;top:276.3px;width:410.7px;height:231.2px;overflow:hidden">
<div style="position:absolute;left:101px;top:0;width:310px;height:21px;background:#f4f5f8"></div>
<div style="position:absolute;left:204.7px;top:3px;width:1px;height:15px;background:#e2e4e9"></div>
<div style="position:absolute;left:307.7px;top:3px;width:1px;height:15px;background:#e2e4e9"></div>
</div>
<div class="t" style="left:611.8px;top:281.4px;font-size:6.5px;color:#5a80b8;letter-spacing:-.1px;-webkit-text-stroke:.3px #5a80b8">TOTAL TRAFFIC</div>
<div class="t" style="left:714.7px;top:281.4px;font-size:6.5px;color:#333;letter-spacing:-.1px;-webkit-text-stroke:.3px #333">KEYWORDS</div>
<div class="t" style="left:817.9px;top:281.4px;font-size:6.5px;color:#333;letter-spacing:-.1px;-webkit-text-stroke:.3px #333">TRAFFIC COST</div>
<div class="t" style="left:921px;top:281.4px;font-size:6.5px;color:#333;letter-spacing:-.1px;-webkit-text-stroke:.3px #333">BACKLINKS</div>
<div class="t" style="left:610.7px;top:309.5px;font-size:7.3px;color:#333;letter-spacing:-.15px;-webkit-text-stroke:.15px #333">6M</div>
<div class="t" style="left:628px;top:309.5px;font-size:7.3px;color:#333;letter-spacing:-.15px;-webkit-text-stroke:.15px #333">12M</div>
<div class="t" style="left:648.5px;top:309.5px;font-size:7.3px;color:#333;letter-spacing:-.15px;-webkit-text-stroke:.15px #333">18M</div>
<div class="t" style="left:668.5px;top:309.5px;font-size:7.3px;color:#333;letter-spacing:-.15px;-webkit-text-stroke:.15px #333">24M</div>
<div class="t" style="left:689.7px;top:309.5px;font-size:7.3px;color:#333;letter-spacing:-.15px;-webkit-text-stroke:.15px #333">30M</div>
<div class="t" style="left:711.6px;top:309.5px;font-size:7.3px;color:#333;letter-spacing:-.15px;-webkit-text-stroke:.15px #333">36M</div>
<div class="t" style="left:733px;top:309.5px;font-size:7.3px;color:#333;letter-spacing:-.15px;-webkit-text-stroke:.15px #333">All</div>
<div style="position:absolute;left:627px;top:319.8px;width:15.5px;height:1.2px;background:#4b6fb5"></div>
<div style="position:absolute;left:933.5px;top:310px;width:15.5px;height:8.5px;border-radius:4.25px;background:#3d6ee0"></div>
<div style="position:absolute;left:941.6px;top:311.1px;width:6.3px;height:6.3px;border-radius:50%;background:#fff"></div>
<div class="t" style="left:954px;top:309.8px;font-size:8px;color:#444;letter-spacing:-.1px">Show updates</div>
<div class="t" style="left:609.7px;top:329.5px;font-size:7.1px;color:#999;">Traffic</div>
<div class="t" style="right:20.5px;top:329.5px;font-size:6.8px;color:#9a8fe0;">Traffic from AIO</div>
<div class="t" style="left:609px;top:348.5px;font-size:6.8px;color:#666;">4K</div>
<div class="t" style="left:609px;top:402px;font-size:6.8px;color:#666;">2K</div>
<div class="t" style="left:613px;top:455.5px;font-size:6.8px;color:#666;">0</div>
<div style="position:absolute;left:0;top:0;width:1024px;height:578px;pointer-events:none"><svg style="position:absolute;left:0;top:0" width="1024" height="578" viewBox="0 0 1024 578"><line x1="624.4" y1="353.3" x2="1003.5" y2="353.3" stroke="#eceef2" stroke-width="1"/><line x1="624.4" y1="407.1" x2="1003.5" y2="407.1" stroke="#eceef2" stroke-width="1"/><line x1="628.3" y1="460.3" x2="999.3" y2="460.3" stroke="#a9b6e2" stroke-width="1.2"/><path d="M628.30 419.50 C638.48 415.65 648.65 411.80 658.83 411.80 C669.34 411.80 679.86 412.50 690.37 412.80 C700.54 413.09 710.72 413.60 720.90 413.60 C731.41 413.60 741.92 399.92 752.44 390.80 C762.95 381.68 773.47 358.90 783.98 358.90 C793.48 358.90 802.98 413.00 812.47 413.00 C822.99 413.00 833.50 383.50 844.02 383.50 C854.19 383.50 864.37 388.37 874.54 389.90 C885.06 391.48 895.57 390.83 906.09 392.70 C916.26 394.51 926.44 397.90 936.61 401.20 C947.13 404.61 957.64 412.90 968.16 412.90 C978.67 412.90 989.19 392.45 999.70 372.00" fill="none" stroke="#5da57a" stroke-width="1.8"/><circle cx="628.30" cy="419.50" r="2.1" fill="#5da57a"/><circle cx="658.83" cy="411.80" r="2.1" fill="#5da57a"/><circle cx="690.37" cy="412.80" r="2.1" fill="#5da57a"/><circle cx="720.90" cy="413.60" r="2.1" fill="#5da57a"/><circle cx="752.44" cy="390.80" r="2.1" fill="#5da57a"/><circle cx="783.98" cy="358.90" r="2.1" fill="#5da57a"/><circle cx="812.47" cy="413.00" r="2.1" fill="#5da57a"/><circle cx="844.02" cy="383.50" r="2.1" fill="#5da57a"/><circle cx="874.54" cy="389.90" r="2.1" fill="#5da57a"/><circle cx="906.09" cy="392.70" r="2.1" fill="#5da57a"/><circle cx="936.61" cy="401.20" r="2.1" fill="#5da57a"/><circle cx="968.16" cy="412.90" r="2.1" fill="#5da57a"/><circle cx="999.70" cy="372.00" r="2.1" fill="#5da57a"/><circle cx="628.30" cy="460.3" r="2" fill="#4a78e0"/><circle cx="658.83" cy="460.3" r="2" fill="#4a78e0"/><g transform="translate(686.37 456.3) scale(.1667)"><path fill="#EA4335" d="M24 9.5c3.5 0 6.6 1.2 9.1 3.6l6.8-6.8C35.8 2.5 30.3 0 24 0 14.6 0 6.6 5.4 2.6 13.3l7.9 6.1C12.4 13.7 17.7 9.5 24 9.5z"/><path fill="#4285F4" d="M46.1 24.5c0-1.6-.1-3.1-.4-4.5H24v9h12.4c-.5 2.9-2.2 5.3-4.6 7l7.2 5.6c4.2-3.9 7.1-9.7 7.1-17.1z"/><path fill="#FBBC05" d="M10.5 28.6c-.5-1.4-.8-3-.8-4.6s.3-3.2.8-4.6l-7.9-6.1C.9 16.6 0 20.2 0 24s.9 7.4 2.6 10.7l7.9-6.1z"/><path fill="#34A853" d="M24 48c6.5 0 11.9-2.1 15.9-5.8l-7.2-5.6c-2.2 1.5-5 2.4-8.7 2.4-6.3 0-11.6-4.2-13.5-10l-7.9 6.1C6.6 42.6 14.6 48 24 48z"/></g><g transform="translate(716.90 456.3) scale(.1667)"><path fill="#EA4335" d="M24 9.5c3.5 0 6.6 1.2 9.1 3.6l6.8-6.8C35.8 2.5 30.3 0 24 0 14.6 0 6.6 5.4 2.6 13.3l7.9 6.1C12.4 13.7 17.7 9.5 24 9.5z"/><path fill="#4285F4" d="M46.1 24.5c0-1.6-.1-3.1-.4-4.5H24v9h12.4c-.5 2.9-2.2 5.3-4.6 7l7.2 5.6c4.2-3.9 7.1-9.7 7.1-17.1z"/><path fill="#FBBC05" d="M10.5 28.6c-.5-1.4-.8-3-.8-4.6s.3-3.2.8-4.6l-7.9-6.1C.9 16.6 0 20.2 0 24s.9 7.4 2.6 10.7l7.9-6.1z"/><path fill="#34A853" d="M24 48c6.5 0 11.9-2.1 15.9-5.8l-7.2-5.6c-2.2 1.5-5 2.4-8.7 2.4-6.3 0-11.6-4.2-13.5-10l-7.9 6.1C6.6 42.6 14.6 48 24 48z"/></g><g fill="#2a2a2e"><ellipse cx="752.44" cy="457.3" rx="2.9" ry="1.2"/><rect x="749.54" y="458.7" width="5.8" height="1.4" rx=".7"/><rect x="749.54" y="460.6" width="5.8" height="1.4" rx=".7"/><rect x="749.54" y="462.5" width="5.8" height="1.2" rx=".6"/></g><circle cx="783.98" cy="460.3" r="2" fill="#4a78e0"/><g transform="translate(808.47 456.3) scale(.1667)"><path fill="#EA4335" d="M24 9.5c3.5 0 6.6 1.2 9.1 3.6l6.8-6.8C35.8 2.5 30.3 0 24 0 14.6 0 6.6 5.4 2.6 13.3l7.9 6.1C12.4 13.7 17.7 9.5 24 9.5z"/><path fill="#4285F4" d="M46.1 24.5c0-1.6-.1-3.1-.4-4.5H24v9h12.4c-.5 2.9-2.2 5.3-4.6 7l7.2 5.6c4.2-3.9 7.1-9.7 7.1-17.1z"/><path fill="#FBBC05" d="M10.5 28.6c-.5-1.4-.8-3-.8-4.6s.3-3.2.8-4.6l-7.9-6.1C.9 16.6 0 20.2 0 24s.9 7.4 2.6 10.7l7.9-6.1z"/><path fill="#34A853" d="M24 48c6.5 0 11.9-2.1 15.9-5.8l-7.2-5.6c-2.2 1.5-5 2.4-8.7 2.4-6.3 0-11.6-4.2-13.5-10l-7.9 6.1C6.6 42.6 14.6 48 24 48z"/></g><circle cx="844.02" cy="460.3" r="2" fill="#4a78e0"/><circle cx="874.54" cy="460.3" r="2" fill="#4a78e0"/><g transform="translate(902.09 456.3) scale(.1667)"><path fill="#EA4335" d="M24 9.5c3.5 0 6.6 1.2 9.1 3.6l6.8-6.8C35.8 2.5 30.3 0 24 0 14.6 0 6.6 5.4 2.6 13.3l7.9 6.1C12.4 13.7 17.7 9.5 24 9.5z"/><path fill="#4285F4" d="M46.1 24.5c0-1.6-.1-3.1-.4-4.5H24v9h12.4c-.5 2.9-2.2 5.3-4.6 7l7.2 5.6c4.2-3.9 7.1-9.7 7.1-17.1z"/><path fill="#FBBC05" d="M10.5 28.6c-.5-1.4-.8-3-.8-4.6s.3-3.2.8-4.6l-7.9-6.1C.9 16.6 0 20.2 0 24s.9 7.4 2.6 10.7l7.9-6.1z"/><path fill="#34A853" d="M24 48c6.5 0 11.9-2.1 15.9-5.8l-7.2-5.6c-2.2 1.5-5 2.4-8.7 2.4-6.3 0-11.6-4.2-13.5-10l-7.9 6.1C6.6 42.6 14.6 48 24 48z"/></g><circle cx="936.61" cy="460.3" r="2" fill="#4a78e0"/><g transform="translate(964.16 456.3) scale(.1667)"><path fill="#EA4335" d="M24 9.5c3.5 0 6.6 1.2 9.1 3.6l6.8-6.8C35.8 2.5 30.3 0 24 0 14.6 0 6.6 5.4 2.6 13.3l7.9 6.1C12.4 13.7 17.7 9.5 24 9.5z"/><path fill="#4285F4" d="M46.1 24.5c0-1.6-.1-3.1-.4-4.5H24v9h12.4c-.5 2.9-2.2 5.3-4.6 7l7.2 5.6c4.2-3.9 7.1-9.7 7.1-17.1z"/><path fill="#FBBC05" d="M10.5 28.6c-.5-1.4-.8-3-.8-4.6s.3-3.2.8-4.6l-7.9-6.1C.9 16.6 0 20.2 0 24s.9 7.4 2.6 10.7l7.9-6.1z"/><path fill="#34A853" d="M24 48c6.5 0 11.9-2.1 15.9-5.8l-7.2-5.6c-2.2 1.5-5 2.4-8.7 2.4-6.3 0-11.6-4.2-13.5-10l-7.9 6.1C6.6 42.6 14.6 48 24 48z"/></g><circle cx="999.70" cy="460.3" r="2" fill="#4a78e0"/></svg></div>
<div class="t" style="left:603.3px;top:464.5px;width:50px;text-align:center;font-size:6.8px;color:#666">Sep 2024</div>
<div class="t" style="left:665.3695890410959px;top:464.5px;width:50px;text-align:center;font-size:6.8px;color:#666">Nov 2024</div>
<div class="t" style="left:727.4391780821917px;top:464.5px;width:50px;text-align:center;font-size:6.8px;color:#666">Jan 2025</div>
<div class="t" style="left:787.4736986301369px;top:464.5px;width:50px;text-align:center;font-size:6.8px;color:#666">Mar 2025</div>
<div class="t" style="left:849.5432876712329px;top:464.5px;width:50px;text-align:center;font-size:6.8px;color:#666">May 2025</div>
<div class="t" style="left:911.6128767123287px;top:464.5px;width:50px;text-align:center;font-size:6.8px;color:#666">Jul 2025</div>
<div class="t" style="right:20.5px;top:464.5px;font-size:6.8px;color:#666">Sep 2025</div>
<div style="position:absolute;left:615px;top:486.7px;width:8.5px;height:8.5px;border-radius:2px;background:#62a87c"></div>
<svg style="position:absolute;left:616px;top:488px" width="6.5" height="6.5" viewBox="0 0 7 7" fill="none" stroke="#fff" stroke-width="1.1"><path d="M1.3 3.6l1.5 1.5 3-3.2"/></svg>
<div class="t" style="left:630px;top:487px;font-size:8.2px;color:#444;">Organic</div>
<div style="position:absolute;left:667.5px;top:486.7px;width:8.5px;height:8.5px;border-radius:2px;background:#4f7ce0"></div>
<svg style="position:absolute;left:668.5px;top:488px" width="6.5" height="6.5" viewBox="0 0 7 7" fill="none" stroke="#fff" stroke-width="1.1"><path d="M1.3 3.6l1.5 1.5 3-3.2"/></svg>
<div class="t" style="left:682px;top:487px;font-size:8.2px;color:#444;">Paid</div>
<div style="position:absolute;left:706.5px;top:486.7px;width:8.5px;height:8.5px;border-radius:2px;background:#fff;border:1px solid #dcdfe4"></div>
<div class="t" style="left:721px;top:487px;font-size:8.2px;color:#444;">Organic (Old)</div>
<div style="position:absolute;left:985px;top:482.7px;width:15.8px;height:15.7px;border:1px solid #dfe2e7;border-radius:2px;background:#fff"></div>
<svg style="position:absolute;left:989.5px;top:486.8px" width="7" height="7.5" viewBox="0 0 7 7.5"><path d="M2.5 0h2v3h1.8L3.5 5.5.7 3h1.8z" fill="#222"/><rect x=".5" y="6.3" width="6" height="1.2" fill="#222"/></svg>
<div style="position:absolute;left:974.5px;top:513.5px;width:35px;height:35px;border-radius:50%;background:#2353dc;z-index:30"></div>
<div style="position:absolute;left:933px;top:520px;width:77.2px;height:28px;background:#1d2333;border-radius:4px;z-index:31;box-shadow:0 1px 4px rgba(0,0,0,.25)"></div>
<div class="t" style="left:944.4px;top:529.5px;font-size:9.2px;color:#f2f3f5;z-index:32">Help Hub</div>
<svg style="position:absolute;left:990.8px;top:525.6px;z-index:32" width="16" height="16" viewBox="0 0 16 16"><path d="M5 14.3h6.8a2 2 0 0 0 2-2V5.8" fill="none" stroke="#fff" stroke-width="2.3" stroke-linecap="round"/><g transform="skewX(-9) translate(1.6 0)"><rect x="1" y=".6" width="11.2" height="10.4" rx="2" fill="#fff" stroke="#1d2333" stroke-width=".8"/></g><text x="6.4" y="8.9" font-size="8.6" font-weight="bold" text-anchor="middle" fill="#1d2333" font-family="Liberation Sans" transform="skewX(-9) translate(1.4 0)">?</text></svg></div>
</body></html>
